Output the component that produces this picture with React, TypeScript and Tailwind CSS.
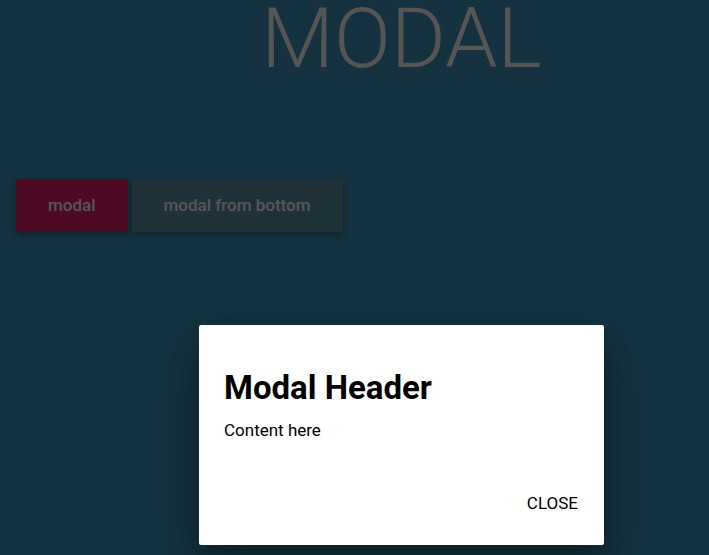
import React from 'react';

const font = { fontFamily: 'Roboto, "Noto Sans", sans-serif' };

export default function App() {
  return (
    <div className="relative w-[709px] h-[555px] overflow-hidden bg-[#14323f]" style={font}>
      {/* Page underneath the overlay */}
      <div className="pl-[94px]">
        <h1 className="text-center text-[84px] font-light leading-[77px] text-[#555555]">MODAL</h1>
      </div>
      <div className="mt-[102px] ml-4 flex gap-1">
        <button className="h-[53px] px-8 rounded-[2px] bg-[#4e0a24] text-[17px] font-medium text-[#575757] shadow-[0_3px_6px_rgba(0,0,0,0.25)]">
          modal
        </button>
        <button className="h-[53px] px-8 rounded-[2px] bg-[#1f323a] text-[17px] font-medium text-[#575757] shadow-[0_3px_6px_rgba(0,0,0,0.25)]">
          modal from bottom
        </button>
      </div>

      {/* Modal */}
      <div className="absolute inset-0 pl-[94px] pt-[325px] flex justify-center items-start">
        <div className="w-[405px] h-[220px] rounded-[2px] bg-white flex flex-col shadow-[0_16px_28px_rgba(0,0,0,0.22),0_25px_55px_rgba(0,0,0,0.21)]">
          <div className="pt-[46px] px-[25px]">
            <h4 className="text-[33px] font-bold leading-none text-black">Modal Header</h4>
            <p className="mt-[18px] text-[17px] leading-none text-black">Content here</p>
          </div>
          <div className="mt-auto flex justify-end pr-[26px] pb-[33px]">
            <button className="text-[17px] leading-none uppercase text-black">Close</button>
          </div>
        </div>
      </div>
    </div>
  );
}
